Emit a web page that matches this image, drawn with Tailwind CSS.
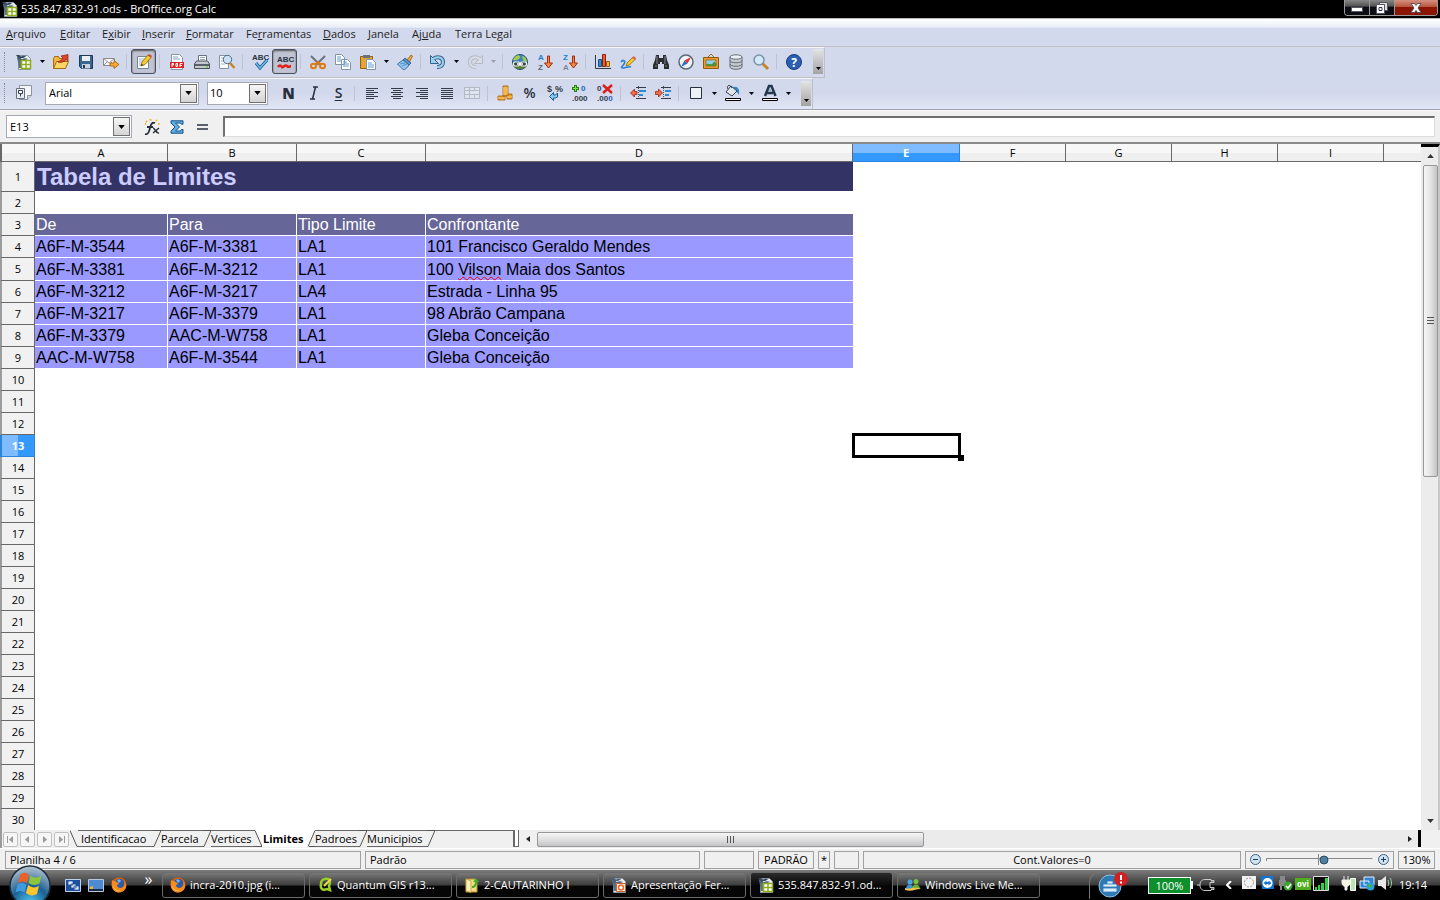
<!DOCTYPE html>
<html lang="pt-BR">
<head>
<meta charset="utf-8">
<title>535.847.832-91.ods - BrOffice.org Calc</title>
<script src="https://cdn.jsdelivr.net/npm/@tailwindcss/browser@4"></script>
</head>
<body class="flex h-screen min-w-[1100px] flex-col overflow-hidden bg-[#f0f0f0] font-['Open_Sans','Noto_Sans',sans-serif] text-[11px] leading-4 text-black">

<svg class="hidden" aria-hidden="true">
  <symbol id="down" viewBox="0 0 5 3"><path d="M0 0h5L2.500 3z" fill="currentColor"/></symbol>
  <symbol id="calc" viewBox="0 0 16 16"><path d="M2.500 1.500h9l3 3v11h-12z" fill="#e9edf1" stroke="#8a96a3"/><path d="M1 3h4v11H3z" fill="#5d7085"/><path d="M0 1.500c2-1 4 0 5 1 2-1 4-1 5 0l-3 1.500H3z" fill="#33475c"/><path d="M1 4.500c2-1 4 0 5 .500 2-1 4-1 6 0l-4 1.500H4z" fill="#4c6076"/><path d="M5.500 6.500h9v8h-9z" fill="#fff" stroke="#8fae1b" stroke-width="1.600"/><path d="M10 6.500v8M5.500 10.500h9" stroke="#8fae1b" stroke-width="1.500"/></symbol>
  <symbol id="firefox" viewBox="0 0 16 16"><circle cx="8" cy="8" r="7.500" fill="#e66000"/><circle cx="8.500" cy="6.500" r="4.800" fill="#2a5ca8"/><path d="M6 3c2-1 4 0 4 1L8 6z" fill="#7db4e8"/><path d="M1 3c1 1 2 1 3 1 1 1 3 1 4 3l-2 1c0 3 4 4 6 2 2-1 2-4 1-6 4 4 2 11-5 11.500C2 15 0 10 1 3z" fill="#f58a1f"/><path d="M2 8c1 4 4 6 8 5-3 3-8 0-8-5z" fill="#ffc94a"/></symbol>
</svg>

<header class="relative flex h-[19px] shrink-0 items-center border-b border-[#b8b8b8] bg-black pl-[2px] text-white">
  <svg class="mr-[3px] size-4"><use href="#calc"/></svg>
  <h1>535.847.832-91.ods - BrOffice.org Calc</h1>
  <div class="absolute top-0 right-[2px] flex h-4 overflow-hidden rounded-b border border-t-0 border-[#9a9a9a]">
    <button aria-label="Minimizar" class="flex w-[25px] items-center justify-center border-r border-[#9a9a9a] bg-linear-to-b from-[#888] via-[#555] via-40% to-[#0c0c14] to-50%"><svg class="mt-1 h-[5px] w-3" viewBox="0 0 12 5"><path d="M.5.500h11v4H.5z" fill="#fff" stroke="#556"/></svg></button>
    <button aria-label="Restaurar" class="flex w-[25px] items-center justify-center border-r border-[#9a9a9a] bg-linear-to-b from-[#888] via-[#555] via-40% to-[#0c0c14] to-50%"><svg class="h-3 w-3" viewBox="0 0 12 12"><path d="M3.500.500h8v8h-8z" fill="#ddd" stroke="#556"/><path d="M.5 2.500h8v9h-8z" fill="#fff" stroke="#556"/><path d="M3 5.500h3v3H3z" fill="#fff" stroke="#334"/></svg></button>
    <button aria-label="Fechar" class="flex w-[42px] items-center justify-center bg-linear-to-b from-[#d69080] via-[#b8543c] via-45% to-[#8c1500] to-50%"><svg class="h-[10px] w-3" viewBox="0 0 12 10"><path d="M1 .5h3.500L6 2.500 7.500.5H11L8 5l3 4.500H7.500L6 7.500l-1.500 2H1L4 5z" fill="#fff" stroke="#556"/></svg></button>
  </div>
</header>

<nav class="flex h-[28px] shrink-0 items-center gap-3 border-b border-[#c0c0c4] bg-linear-to-b from-white via-[#e8eef6] via-30% to-[#d3d9ec] to-35% px-[6px] pt-[2px] text-[#1e1e1e]">
  <a href="#" class="w-[42px]"><u>A</u>rquivo</a>
  <a href="#" class="w-[30px]"><u>E</u>ditar</a>
  <a href="#" class="w-[28px]">E<u>x</u>ibir</a>
  <a href="#" class="w-[32px]"><u>I</u>nserir</a>
  <a href="#" class="w-[48px]"><u>F</u>ormatar</a>
  <a href="#" class="w-[65px]">Fe<u>r</u>ramentas</a>
  <a href="#" class="w-[33px]"><u>D</u>ados</a>
  <a href="#" class="w-[32px]"><u>J</u>anela</a>
  <a href="#" class="w-[31px]">Aj<u>u</u>da</a>
  <a href="#">Terra Legal</a>
</nav>

<div role="toolbar" aria-label="Padrão" class="shrink-0 bg-[#d3d9ec]">
 <div class="flex h-[31px] w-[825px] items-center border-r border-b border-t border-r-[#c0c0c4] border-b-[#c0c0c4] border-t-[#f4f6fc] pb-[2px] [&>button]:flex [&>button]:h-[25px] [&>button]:w-[25px] [&>button]:shrink-0 [&>button]:items-center [&>button]:justify-center [&_svg]:size-4 [&_svg]:overflow-visible [&>button.dd]:w-3 [&_.dd_svg]:h-[3px] [&_.dd_svg]:w-[5px] [&>i]:mr-[4px] [&>i]:ml-[3px] [&>i]:h-[15px] [&>i]:w-0 [&>i]:border-l [&>i]:border-[#bfc3d0]">
  <span class="mr-[6px] ml-[4px] h-5 w-px border-l border-dotted border-[#888]"></span>
  <button aria-label="Novo"><svg><use href="#calc"/></svg></button>
  <button class="dd" aria-label="Opções de novo"><svg><use href="#down"/></svg></button>
  <button aria-label="Abrir"><svg viewBox="0 0 16 16"><path d="M.5 14.500v-10l1-2h4l1 2h6v2" fill="#f3b63c" stroke="#a86a0c"/><path d="M.5 14.500l3-7h12l-3 7z" fill="#fbd468" stroke="#a86a0c"/><path d="M5 8c2-1 4-2 5-4L8 2l7-1.500V7l-2-1.500C11 8 8 9 5 8z" fill="#e0452c" stroke="#8e1b10" stroke-width=".7"/></svg></button>
  <button aria-label="Salvar"><svg viewBox="0 0 16 16"><path d="M1.500 1.500h13v13h-11l-2-2z" fill="#39668c" stroke="#1d3a56"/><path d="M4 2h8v5H4z" fill="#e9eff5"/><path d="M4 10h8v4.500H4z" fill="#c6d2de"/><path d="M5 11h2v3H5z" fill="#1d3a56"/></svg></button>
  <button aria-label="E-mail"><svg viewBox="0 0 16 16"><path d="M.5 4.500h11v7H.5z" fill="#f7f7f7" stroke="#8b8b8b"/><path d="M.5 4.500L6 9l5.500-4.500M.5 11.500l4-4M11.500 11.500l-4-4" fill="none" stroke="#999"/><path d="M7 9h4V6.500l5 4-5 4V12H7z" fill="#f9a833" stroke="#9d5b08" stroke-width=".8"/></svg></button>
  <i></i>
  <button aria-label="Editar arquivo" aria-pressed="true" class="rounded-[3px] border border-[#4b4f5c] bg-[#bfc3d3] shadow-[inset_0_1px_2px_#555]"><svg viewBox="0 0 16 16"><path d="M1.500 2.500h11v12h-11z" fill="#fff" stroke="#76879a"/><path d="M3 5h7M3 7h6M3 9h5M3 11h5" stroke="#9db2c9"/><path d="M5 12l1-4 6-7 3 2.500-6 7z" fill="#f6c832" stroke="#8d6508" stroke-width=".8"/><path d="M12 1l1-1 3 2-1 1.500z" fill="#d43f30"/><path d="M5 12l.6-2 1.600 1z" fill="#222"/></svg></button>
  <i></i>
  <button aria-label="Exportar como PDF"><svg viewBox="0 0 16 16"><path d="M2.500.500h8l3 3v12h-11z" fill="#fff" stroke="#8394a6"/><path d="M4 3h5M4 5h7" stroke="#7fa0c4"/><path d="M1 8h14v6H1z" fill="#df2020"/><path d="M3 13V9.500h1.500v1.500H3M7 12.500v-3h1.500v3zM11 13V9.500h2.500M11 11.500h2" fill="none" stroke="#fff"/></svg></button>
  <button aria-label="Imprimir"><svg viewBox="0 0 16 16"><path d="M4.500 1.500h8v6h-8z" fill="#fff" stroke="#68747f"/><path d="M6 3.500h5M6 5.500h5" stroke="#9ab"/><path d="M2.500 7h11l2 3v4.500H.5V10z" fill="#c3c9cf" stroke="#4c5358"/><path d="M1 10h14v2H1z" fill="#5a6267"/><path d="M12 13h2" stroke="#4c2"/></svg></button>
  <button aria-label="Visualizar página"><svg viewBox="0 0 16 16"><path d="M.5 1.500h9v13h-9z" fill="#fff" stroke="#8394a6"/><path d="M2 4h4M2 7h3M2 10h4" stroke="#9db2c9"/><path d="M11 9l4.500 5" stroke="#c88524" stroke-width="2.500"/><circle cx="8.500" cy="5.500" r="4.200" fill="#c8e2f5" stroke="#51697e"/></svg></button>
  <i></i>
  <button aria-label="Ortografia"><svg viewBox="0 0 16 16"><text x="0" y="6" font-family="Liberation Sans" font-weight="700" font-size="8" fill="#28333f">ABC</text><path d="M4 9l4 5 7-8" fill="none" stroke="#124f86" stroke-width="3"/><path d="M4 9l4 5 7-8" fill="none" stroke="#6fbdf0" stroke-width="1.500"/></svg></button>
  <button aria-label="AutoVerificação ortográfica" aria-pressed="true" class="rounded-[3px] border border-[#4b4f5c] bg-[#bfc3d3] shadow-[inset_0_1px_2px_#555]"><svg viewBox="0 0 16 16"><text x="0" y="8" font-family="Liberation Sans" font-weight="700" font-size="8" fill="#28333f">ABC</text><path d="M1 13c2-3 3-1 4 0s3-3 5-1 3 0 4 0" fill="none" stroke="#e0231a" stroke-width="2.500"/></svg></button>
  <i></i>
  <button aria-label="Cortar"><svg viewBox="0 0 16 16"><path d="M1 2l9 9M15 2l-9 9" stroke="#69747f" stroke-width="2"/><ellipse cx="3.500" cy="12" rx="2.500" ry="2.200" fill="none" stroke="#df7a12" stroke-width="2"/><ellipse cx="12.500" cy="12" rx="2.500" ry="2.200" fill="none" stroke="#df7a12" stroke-width="2"/><path d="M5 11l3-3 3 3" fill="none" stroke="#df7a12" stroke-width="2"/></svg></button>
  <button aria-label="Copiar"><svg viewBox="0 0 16 16"><path d="M.5.500h6l3 3v7h-9zM6.500 5.500h6l3 3v7h-9z" fill="#fff" stroke="#8394a6"/><path d="M2 3h4M2 5h4M2 7h4M8 8h4M8 10h6M8 12h6" stroke="#5d9ad3"/></svg></button>
  <button aria-label="Colar"><svg viewBox="0 0 16 16"><path d="M.5 2.500h12v12H.5z" fill="#e5a436" stroke="#94600d"/><path d="M3 1h7v3H3z" fill="#66727d"/><path d="M6.500 5.500h6l3 3v7h-9z" fill="#fff" stroke="#8394a6"/><path d="M8 9h4M8 11h6M8 13h6" stroke="#5d9ad3"/></svg></button>
  <button class="dd" aria-label="Opções de colar"><svg><use href="#down"/></svg></button>
  <button aria-label="Pincel de estilo"><svg viewBox="0 0 16 16"><path d="M10 6l4-5 1.500 1-3 6z" fill="#f2a735" stroke="#95610d" stroke-width=".8"/><path d="M8 4l6 5-2 2-6-5z" fill="#5a93cd" stroke="#245489" stroke-width=".8"/><path d="M6 6l6 5c-2 3-4 5-6 4.500L.5 10z" fill="#8fc8f3" stroke="#245489" stroke-width=".8"/><path d="M3 10l5-1M5 12l5-2" stroke="#3b78b5" stroke-width=".7"/></svg></button>
  <i></i>
  <button aria-label="Desfazer"><svg viewBox="0 0 16 16"><path d="M3 5c4-3 10-2 10 3 0 4-3 5-6 5" fill="none" stroke="#32658e" stroke-width="4"/><path d="M.5 1.500v8h8L6 7 3 4z" fill="#9fd0ef" stroke="#32658e"/><path d="M3 5c4-3 10-2 10 3 0 4-3 5-6 5" fill="none" stroke="#9fd0ef" stroke-width="2"/></svg></button>
  <button class="dd" aria-label="Opções de desfazer"><svg><use href="#down"/></svg></button>
  <button aria-label="Refazer" disabled><svg viewBox="0 0 16 16"><path d="M13 5C9 2 3 3 3 8c0 4 3 5 6 5" fill="none" stroke="#b4b9c4" stroke-width="4"/><path d="M15.500 1.500v8h-8L10 7l3-3z" fill="#d9dde8" stroke="#b4b9c4"/><path d="M13 5C9 2 3 3 3 8c0 4 3 5 6 5" fill="none" stroke="#d9dde8" stroke-width="2"/></svg></button>
  <button class="dd text-[#9a9ea8]" aria-label="Opções de refazer" disabled><svg><use href="#down"/></svg></button>
  <i></i>
  <button aria-label="Hyperlink"><svg viewBox="0 0 16 16"><circle cx="8" cy="8" r="7.500" fill="#3f84c4" stroke="#24506f"/><path d="M2 4c3-4 6-3 6-1S4 7 1 6zM10 2c4 1 5 4 5 7l-4-3z" fill="#a5cf43"/><path d="M1 10h14c-1 4-4 5-7 5s-6-1-7-5z" fill="#56802f"/><path d="M2.500 8h4l1 1v2l-1 1h-4l-1-1V9zM9.500 8h4l1 1v2l-1 1h-4l-1-1V9z" fill="#3b4a3c" stroke="#eee" stroke-width="1.200"/><path d="M5 10h6" stroke="#fff" stroke-width="1.500"/></svg></button>
  <button aria-label="Classificar em ordem crescente"><svg viewBox="0 0 16 16"><text x="1" y="6" font-family="Liberation Sans" font-weight="700" font-size="8" fill="#1d7ec8">A</text><text x="1" y="16" font-family="Liberation Sans" font-weight="700" font-size="8" fill="#5b6672">Z</text><path d="M10.500 2h2v7h3l-4 5-4-5h3z" fill="#f08a3c" stroke="#a82a12"/></svg></button>
  <button aria-label="Classificar em ordem decrescente"><svg viewBox="0 0 16 16"><text x="1" y="6" font-family="Liberation Sans" font-weight="700" font-size="8" fill="#1d7ec8">Z</text><text x="1" y="16" font-family="Liberation Sans" font-weight="700" font-size="8" fill="#7c8794">A</text><path d="M10.500 2h2v7h3l-4 5-4-5h3z" fill="#f08a3c" stroke="#a82a12"/></svg></button>
  <i></i>
  <button aria-label="Gráfico"><svg viewBox="0 0 16 16"><path d="M.5 1v13.500H16" fill="none" stroke="#333c46"/><path d="M3.500 5.500h3v7h-3z" fill="#2f8ed2" stroke="#145084"/><path d="M7.500.500h3v12h-3z" fill="#ee5a32" stroke="#8d200c"/><path d="M11.500 7.500h3v5h-3z" fill="#f9b23c" stroke="#9a5b08"/></svg></button>
  <button aria-label="Mostrar funções de desenho"><svg viewBox="0 0 16 16"><path d="M1 8c2-3 5-1 3 2s-4 4-1 4 6-2 8-1" fill="none" stroke="#2d80d8" stroke-width="1.600"/><path d="M6 12l1-3 6-6 2.500 2-6 6z" fill="#f6c832" stroke="#8d6508" stroke-width=".8"/><path d="M12 4l1.500-2L16 4l-1 2z" fill="#e2604f"/></svg></button>
  <i></i>
  <button aria-label="Localizar e substituir"><svg viewBox="0 0 16 16"><path d="M3 1h3v3h4V1h3l1 5 2 5v4h-5v-5H9V8H7v2H5v5H0v-4l2-5z" fill="#2a2d30"/><path d="M4 2v8M12 2v8M2 12h2M12 12h2" stroke="#84898f"/></svg></button>
  <button aria-label="Navegador"><svg viewBox="0 0 16 16"><circle cx="8" cy="8" r="7" fill="#eef3f8" stroke="#5c6875" stroke-width="1.500"/><path d="M13 3L9.500 9.500l-3-3z" fill="#e3302a"/><path d="M3 13l3.500-6.500 3 3z" fill="#2a6cc4"/></svg></button>
  <button aria-label="Galeria"><svg viewBox="0 0 16 16"><path d="M5 3l3-3 3 3" fill="none" stroke="#986b25"/><path d="M.5 3.500h15v11H.5z" fill="#e79b31" stroke="#8f5a0c"/><path d="M3 6h10v6H3z" fill="#8fd0f2" stroke="#8f5a0c" stroke-width=".7"/><path d="M3 11c3-3 5 1 7-2s2 0 3 0v3H3z" fill="#4b9233"/></svg></button>
  <button aria-label="Fontes de dados"><svg viewBox="0 0 16 16"><path d="M2 3v10c0 3 12 3 12 0V3z" fill="#c5cacf" stroke="#666e76"/><ellipse cx="8" cy="3" rx="6" ry="2.200" fill="#eef0f2" stroke="#666e76"/><path d="M2 6.500c0 3 12 3 12 0M2 10c0 3 12 3 12 0" fill="none" stroke="#666e76"/></svg></button>
  <button aria-label="Zoom"><svg viewBox="0 0 16 16"><path d="M9.500 9.500l5.500 5.500" stroke="#c88524" stroke-width="3"/><circle cx="6" cy="6" r="5" fill="#d3e9f8" stroke="#7a92a8" stroke-width="1.500"/></svg></button>
  <i></i>
  <button aria-label="Ajuda"><svg viewBox="0 0 16 16"><circle cx="8" cy="8" r="7.500" fill="#2c5fb0" stroke="#163c7e"/><text x="8" y="12.500" text-anchor="middle" font-family="Open Sans" font-weight="700" font-size="12" fill="#fff">?</text></svg></button>
  <button aria-label="Mais botões" class="dd ml-[7px] !w-[10px] !items-end bg-linear-to-b from-[#e4e4e4] to-[#a4a4a4] pb-1"><svg><use href="#down"/></svg></button>
 </div>
</div>

<div role="toolbar" aria-label="Formatação" class="shrink-0 border-b border-[#9ea3b2] bg-linear-to-b from-[#d3d9ec] from-50% to-[#e0e6f4]">
 <div class="flex h-[31px] w-[813px] items-center border-t border-r border-t-[#f4f6fc] border-r-[#c0c0c4] pb-[2px] [&>button]:flex [&>button]:h-[25px] [&>button]:w-[25px] [&>button]:shrink-0 [&>button]:items-center [&>button]:justify-center [&>button>svg]:size-4 [&>button>svg]:overflow-visible [&>button.dd]:w-3 [&>.dd>svg]:h-[3px] [&>.dd>svg]:w-[5px] [&>i]:mr-[4px] [&>i]:ml-[3px] [&>i]:h-[15px] [&>i]:w-0 [&>i]:border-l [&>i]:border-[#bfc3d0]">
  <span class="mr-[6px] ml-[4px] h-5 w-px border-l border-dotted border-[#888]"></span>
  <button aria-label="Estilos e formatação"><svg viewBox="0 0 16 16"><path d="M3.500.500h12v10l-4 4h-8z" fill="#f4f6f9" stroke="#8a94a1"/><path d="M15.500 10.500h-4v4" fill="#cfd6e0" stroke="#8a94a1"/><path d="M.5 3.500h8v10h-8z" fill="#e9edf3" stroke="#65707d"/><path d="M2.500 5.500h4v3h-4zM4.500 8.500v3" fill="#fff" stroke="#39434f"/></svg></button>
  <div class="relative ml-[9px] w-[154px] shrink-0">
    <select aria-label="Nome da fonte" class="block h-[23px] w-full appearance-none border border-[#a5a9b5] bg-white pl-[3px] text-[11px]"><option>Arial</option></select>
    <span class="pointer-events-none absolute top-[2px] right-[2px] flex h-[19px] w-[17px] items-center justify-center border border-[#707070] bg-linear-to-b from-[#f6f6f6] to-[#d4d4d4]"><svg class="h-1 w-[7px]" viewBox="0 0 5 3"><use href="#down"/></svg></span>
  </div>
  <div class="relative mr-2 ml-2 w-[61px] shrink-0">
    <select aria-label="Tamanho da fonte" class="block h-[23px] w-full appearance-none border border-[#a5a9b5] bg-white pl-[2px] text-[11px]"><option>10</option></select>
    <span class="pointer-events-none absolute top-[2px] right-[2px] flex h-[19px] w-[17px] items-center justify-center border border-[#707070] bg-linear-to-b from-[#f6f6f6] to-[#d4d4d4]"><svg class="h-1 w-[7px]" viewBox="0 0 5 3"><use href="#down"/></svg></span>
  </div>
  <button class="text-[15px] font-extrabold text-[#28303c]">N</button>
  <button aria-label="Itálico"><svg viewBox="0 0 16 16"><path d="M7 2h5M4 14h5M9.500 2L6.500 14" fill="none" stroke="#28303c" stroke-width="1.500"/></svg></button>
  <button class="text-[14px] font-semibold text-[#28303c] underline underline-offset-2">S</button>
  <i></i>
  <button aria-label="Alinhar à esquerda"><svg viewBox="0 0 16 16"><path d="M2 3.500h12M2 5.500h8M2 7.500h12M2 9.500h8M2 11.500h12M2 13.500h8" stroke="#333c48"/></svg></button>
  <button aria-label="Centralizar"><svg viewBox="0 0 16 16"><path d="M2 3.500h12M4 5.500h8M2 7.500h12M4 9.500h8M2 11.500h12M4 13.500h8" stroke="#333c48"/></svg></button>
  <button aria-label="Alinhar à direita"><svg viewBox="0 0 16 16"><path d="M2 3.500h12M6 5.500h8M2 7.500h12M6 9.500h8M2 11.500h12M6 13.500h8" stroke="#333c48"/></svg></button>
  <button aria-label="Justificar"><svg viewBox="0 0 16 16"><path d="M2 3.500h12M2 5.500h12M2 7.500h12M2 9.500h12M2 11.500h12M2 13.500h12" stroke="#333c48"/></svg></button>
  <button aria-label="Mesclar células" disabled><svg viewBox="0 0 16 16"><path d="M.5 2.500h15v11H.5zM.5 5.500h15M.5 9.500h15M5.500 2.500v11M10.500 2.500v3M10.500 9.500v4" fill="#e1e5f0" stroke="#b4b9c6"/></svg></button>
  <i></i>
  <button aria-label="Moeda"><svg viewBox="0 0 16 16"><path d="M6 1h5v10H6zM10 9h5v5h-5zM1 11h7v4H1z" fill="#e99a2b" stroke="#a55f0b" stroke-width=".8"/><path d="M6 3h5M6 5h5M6 7h5M6 9h5M1 13h7M10 12h5" stroke="#ffd475"/></svg></button>
  <button aria-label="Porcentagem" class="text-[14px] font-semibold text-[#28303c]">%</button>
  <button aria-label="Formato padrão"><svg viewBox="0 0 16 16"><text x="0" y="7" font-family="Liberation Sans" font-weight="700" font-size="9" fill="#333c48">$</text><text x="8" y="7" font-family="Liberation Sans" font-weight="700" font-size="9" fill="#333c48">%</text><path d="M2.500 11.500l4-4V10h2l2-2v4l-2 1h-2v2.500z" fill="#8cc7ee" stroke="#175a94"/></svg></button>
  <button aria-label="Adicionar casa decimal"><svg viewBox="0 0 16 16"><path d="M3.500 0v7M0 3.500h7" stroke="#268018" stroke-width="3"/><path d="M3.500 1v5M1 3.500h5" stroke="#8be04e"/><text x="9" y="6" font-family="Liberation Sans" font-weight="700" font-size="8" fill="#1d62d0">0</text><text x="0" y="16" font-family="Liberation Sans" font-weight="700" font-size="8" fill="#333c48">.000</text></svg></button>
  <button aria-label="Excluir casa decimal"><svg viewBox="0 0 16 16"><text x="0" y="6" font-family="Liberation Sans" font-weight="700" font-size="8" fill="#333c48">0</text><text x="0" y="16" font-family="Liberation Sans" font-weight="700" font-size="8" fill="#333c48">.00<tspan fill="#1d62d0">0</tspan></text><path d="M6 0l9 8M15 0L6 8" stroke="#d9201a" stroke-width="2.500"/></svg></button>
  <i></i>
  <button aria-label="Diminuir recuo"><svg viewBox="0 0 16 16"><path d="M8.500 1v14" stroke="#555" stroke-dasharray="1 1"/><path d="M6 2.500h10M6 13.500h10" stroke="#333c48"/><path d="M9 6h7M9 10h4" stroke="#2b8bd8" stroke-width="2"/><path d="M.5 8l4-4v2.500H7v3H4.500V12z" fill="#ee6c4a" stroke="#9a2412" stroke-width=".8"/></svg></button>
  <button aria-label="Aumentar recuo"><svg viewBox="0 0 16 16"><path d="M8.500 1v14" stroke="#555" stroke-dasharray="1 1"/><path d="M6 2.500h10M6 13.500h10" stroke="#333c48"/><path d="M10 6h6M10 10h4" stroke="#2b8bd8" stroke-width="2"/><path d="M7.500 8l-4-4v2.500H.5v3h3V12z" fill="#ee6c4a" stroke="#9a2412" stroke-width=".8"/></svg></button>
  <i></i>
  <button aria-label="Bordas"><svg viewBox="0 0 16 16"><path d="M2.500 2.500h11v11h-11z" fill="#edf3f7" stroke="#28303c"/></svg></button>
  <button class="dd" aria-label="Opções de bordas"><svg><use href="#down"/></svg></button>
  <button aria-label="Cor do plano de fundo"><svg viewBox="0 0 16 16"><path d="M8 2c5-1 7 2 6 8-1-2-2-3-4-4z" fill="#2e8ac8"/><path d="M6 1l6 5-5 5-6-4z" fill="#dfe5ea" stroke="#39434f"/><path d="M3 4C1 0 5-1 7 3" fill="none" stroke="#39434f"/><path d="M.5 13.500h15v2H.5z" fill="#fff" stroke="#000"/></svg></button>
  <button class="dd" aria-label="Opções de plano de fundo"><svg><use href="#down"/></svg></button>
  <button aria-label="Cor da fonte"><svg viewBox="0 0 16 16"><path d="M3 11L7 1h2.500l4 10M5 8h6" fill="none" stroke="#22384f" stroke-width="2.500"/><path d="M8 3l-1 3h2z" fill="#7fa5c5"/><path d="M.5 13.500h15v2H.5z" fill="#fff" stroke="#000"/></svg></button>
  <button class="dd" aria-label="Opções de cor da fonte"><svg><use href="#down"/></svg></button>
  <button aria-label="Mais botões" class="dd ml-[7px] !w-[10px] !items-end bg-linear-to-b from-[#e4e4e4] to-[#a4a4a4] pb-1"><svg><use href="#down"/></svg></button>
 </div>
</div>

<div class="flex h-[34px] shrink-0 items-center border-t border-b-2 border-t-[#fafafa] border-b-[#8a8a8a] bg-[#f0f0f0] pr-[5px] pl-[6px]">
  <div class="flex h-[23px] w-[126px] items-center border border-[#a5a9b5] bg-white pr-px">
    <input aria-label="Caixa de nome" value="E13" class="w-full min-w-0 flex-1 pl-[3px] outline-none">
    <button aria-label="Abrir lista de nomes" class="flex h-[19px] w-[17px] items-center justify-center border border-[#707070] bg-linear-to-b from-[#f6f6f6] to-[#d4d4d4]"><svg class="h-1 w-[7px]" viewBox="0 0 5 3"><use href="#down"/></svg></button>
  </div>
  <button aria-label="Assistente de funções" class="ml-[11px] flex w-[18px] justify-center"><svg class="size-4" viewBox="0 0 16 16"><path d="M1 15c3 1 4-2 5-6s2-6 5-5M3 8h6" fill="none" stroke="#28303c" stroke-width="1.800"/><path d="M9 9c2 0 3 6 6 5M15 9l-6 5" fill="none" stroke="#28303c" stroke-width="1.500"/><path d="M2 2l1 1M6 0l1 1.500M12 1l1 1M14 5h1.500M1 5h1" stroke="#f0b51c" stroke-width="1.800"/></svg></button>
  <button aria-label="Soma" class="ml-[7px] flex w-[18px] justify-center"><svg class="h-[14px] w-[14px]" viewBox="0 0 14 14"><path d="M1 .8h12v3.400h-1.600L10.500 3H5.500l4 4-4 4h5l1-1.500H13v3.700H1v-2L5 7 1 3z" fill="#5eb0e6" stroke="#124f86"/></svg></button>
  <button aria-label="Função" class="ml-[7px] flex w-[18px] justify-center"><svg class="h-[6px] w-[11px]" viewBox="0 0 11 6"><path d="M0 1h11M0 5h11" stroke="#28303c" stroke-width="1.500"/></svg></button>
  <input aria-label="Linha de entrada" class="ml-[12px] h-[21px] min-w-0 flex-1 border-t-2 border-r border-b border-l-2 border-t-[#6f6f6f] border-r-[#ddd] border-b-[#ddd] border-l-[#6f6f6f] bg-white px-1 outline-none">
</div>

<main class="flex min-h-0 flex-1 bg-white">
  <div class="min-w-0 flex-1 overflow-hidden">
    <table class="w-full table-fixed border-separate border-spacing-0 [&_td]:overflow-visible [&_td]:p-0 [&_td]:text-left [&_td]:align-middle [&_td]:font-['Liberation_Sans',Arial,sans-serif] [&_td]:text-[16px] [&_td]:leading-5 [&_td]:whitespace-nowrap [&_th]:border-r [&_th]:border-b [&_th]:border-[#686868] [&_th]:bg-[#f1f1f1] [&_th]:p-0 [&_th]:font-normal [&_tbody_th]:border-l-2 [&_tbody_th]:border-l-[#9c9c9c] [&_thead_th]:bg-linear-to-b [&_thead_th]:from-[#f7f7f7] [&_thead_th]:from-50% [&_thead_th]:to-[#efefef] [&_thead_th]:to-50% [&_tbody_tr]:h-[22px] [&_.fill_td]:border-r [&_.fill_td]:border-b [&_.fill_td]:border-white [&_.fill_td]:bg-[#9999ff] [&_.fill_td]:pt-px [&_.fill_td]:pl-px">
      <colgroup><col class="w-[35px]"><col class="w-[133px]"><col class="w-[129px]"><col class="w-[129px]"><col class="w-[427px]"><col class="w-[107px]"><col class="w-[106px]"><col class="w-[106px]"><col class="w-[106px]"><col class="w-[106px]"><col></colgroup>
      <thead><tr class="h-[18px]"><th class="border-l-2 border-l-[#9c9c9c]"></th><th>A</th><th>B</th><th>C</th><th>D</th><th class="!border-[#2a84dc] !from-[#7fbcff] !to-[#3399ff] !font-bold text-white">E</th><th>F</th><th>G</th><th>H</th><th>I</th><th class="!border-r-0"></th></tr></thead>
      <tbody>
        <tr class="!h-[30px]"><th>1</th><td colspan="4" class="border-b border-white bg-[#333366] !pl-[2px] !text-[24px] !leading-7 font-bold text-[#ccccff]">Tabela de Limites</td></tr>
        <tr><th>2</th></tr>
        <tr class="fill text-white [&>td]:!bg-[#666699]"><th class="text-black">3</th><td>De</td><td>Para</td><td>Tipo Limite</td><td class="!border-r-0">Confrontante</td></tr>
        <tr class="fill"><th>4</th><td>A6F-M-3544</td><td>A6F-M-3381</td><td>LA1</td><td class="!border-r-0">101 Francisco Geraldo Mendes</td></tr>
        <tr class="fill !h-[23px] [&>td]:!pt-[2px]"><th>5</th><td>A6F-M-3381</td><td>A6F-M-3212</td><td>LA1</td><td class="!border-r-0">100 <span class="underline decoration-red-600 decoration-wavy decoration-1 underline-offset-1 [text-decoration-skip-ink:none]">Vilson</span> Maia dos Santos</td></tr>
        <tr class="fill"><th>6</th><td>A6F-M-3212</td><td>A6F-M-3217</td><td>LA4</td><td class="!border-r-0">Estrada - Linha 95</td></tr>
        <tr class="fill"><th>7</th><td>A6F-M-3217</td><td>A6F-M-3379</td><td>LA1</td><td class="!border-r-0">98 Abrão Campana</td></tr>
        <tr class="fill"><th>8</th><td>A6F-M-3379</td><td>AAC-M-W758</td><td>LA1</td><td class="!border-r-0">Gleba Conceição</td></tr>
        <tr class="fill"><th>9</th><td>AAC-M-W758</td><td>A6F-M-3544</td><td>LA1</td><td class="!border-r-0">Gleba Conceição</td></tr>
        <tr><th>10</th></tr>
        <tr><th>11</th></tr>
        <tr><th>12</th></tr>
        <tr><th class="!border-[#2a84dc] !bg-linear-to-r from-[#7fbcff] from-50% to-[#3399ff] to-50% !font-bold text-white">13</th><td></td><td></td><td></td><td></td><td class="relative"><span class="absolute -top-[2px] -left-px h-[25px] w-[109px] border-3 border-black"></span><span class="absolute top-5 left-[105px] size-[6px] bg-black"></span></td></tr>
        <tr><th>14</th></tr>
        <tr><th>15</th></tr>
        <tr><th>16</th></tr>
        <tr><th>17</th></tr>
        <tr><th>18</th></tr>
        <tr><th>19</th></tr>
        <tr><th>20</th></tr>
        <tr><th>21</th></tr>
        <tr><th>22</th></tr>
        <tr><th>23</th></tr>
        <tr><th>24</th></tr>
        <tr><th>25</th></tr>
        <tr><th>26</th></tr>
        <tr><th>27</th></tr>
        <tr><th>28</th></tr>
        <tr><th>29</th></tr>
        <tr><th>30</th></tr>
      </tbody>
    </table>
  </div>
  <div class="flex w-[19px] shrink-0 flex-col items-center border-t-3 border-r-2 border-t-black border-r-[#c8c8c8] bg-[#ececec] pl-px">
    <button aria-label="Rolar para cima" class="flex h-[18px] w-full items-center justify-center"><svg class="h-1 w-[7px] rotate-180 text-[#333]"><use href="#down"/></svg></button>
    <div class="flex h-[312px] w-[15px] shrink-0 items-center justify-center rounded-xs border border-[#979797] bg-linear-to-r from-[#f5f5f5] via-[#e4e4e4] to-[#c4c4c8]"><svg class="h-2 w-[7px]" viewBox="0 0 7 8"><path d="M0 .5h7M0 3.500h7M0 6.500h7" stroke="#555"/></svg></div>
    <button aria-label="Rolar para baixo" class="mt-auto flex h-[18px] w-full items-center justify-center"><svg class="h-1 w-[7px] text-[#333]"><use href="#down"/></svg></button>
  </div>
</main>

<div class="flex h-[18px] shrink-0 border-l-2 border-[#9c9c9c] bg-[#f0f0f0]">
  <div class="flex items-center gap-[2px] pl-px text-[#999] [&>button]:flex [&>button]:size-[15px] [&>button]:items-center [&>button]:justify-center [&>button]:rounded-xs [&>button]:border [&>button]:border-[#c0c0c0] [&>button]:bg-[#f6f6f6] [&_svg]:size-[7px]">
    <button aria-label="Primeira planilha"><svg viewBox="0 0 7 7"><path d="M0 0h1v7H0zM6 0v7L2 3.500z" fill="currentColor"/></svg></button>
    <button aria-label="Planilha anterior"><svg viewBox="0 0 7 7"><path d="M5 0v7L1 3.500z" fill="currentColor"/></svg></button>
    <button aria-label="Próxima planilha"><svg viewBox="0 0 7 7"><path d="M2 0v7l4-3.500z" fill="currentColor"/></svg></button>
    <button aria-label="Última planilha"><svg viewBox="0 0 7 7"><path d="M6 0h1v7H6zM1 0v7l4-3.500z" fill="currentColor"/></svg></button>
  </div>
  <div role="tablist" class="ml-px flex flex-1 [&>button]:h-[17px] [&>button]:shrink-0 [&>button]:border-y [&>button]:border-[#686868] [&>button]:leading-[15px] [&>button]:whitespace-nowrap [&>button[role=tab]]:text-left [&>svg]:h-[17px] [&>svg]:w-2 [&>svg]:shrink-0">
    <svg viewBox="0 0 8 17"><path d="M0 .5L7 16.500h1" fill="none" stroke="#555"/></svg>
    <button role="tab" class="w-[75px] pl-[3px]">Identificacao</button>
    <svg viewBox="0 0 8 17"><path d="M0 16.500h1L8 .5H0" fill="none" stroke="#555"/></svg>
    <button role="tab" class="w-[42px]">Parcela</button>
    <svg viewBox="0 0 8 17"><path d="M0 16.500h1L8 .5H0" fill="none" stroke="#555"/></svg>
    <button role="tab" class="w-[43px]">Vertices</button>
    <svg viewBox="0 0 8 17"><path d="M1 0h7v17z" fill="#fff"/><path d="M0 .5h1L8 16.500H0" fill="none" stroke="#555"/></svg>
    <button role="tab" aria-selected="true" class="w-[45px] !border-white bg-white pl-px font-bold">Limites</button>
    <svg viewBox="0 0 8 17"><path d="M0 0h8L1 17H0z" fill="#fff"/><path d="M1 16.500L8 .5M2 16.500h6" fill="none" stroke="#555"/></svg>
    <button role="tab" class="w-[44px]">Padroes</button>
    <svg viewBox="0 0 8 17"><path d="M0 16.500h1L8 .5H0" fill="none" stroke="#555"/></svg>
    <button role="tab" class="w-[60px]">Municipios</button>
    <svg viewBox="0 0 8 17"><path d="M0 16.500h1L8 .5H0" fill="none" stroke="#555"/></svg>
    <div class="h-[17px] w-[78px] shrink-0 border-t border-[#686868]"></div>
    <div class="h-[17px] w-[6px] shrink-0 border border-t-0 border-l-2 border-[#686868] bg-white"></div>
    <button aria-label="Rolar para a esquerda" class="flex w-[18px] items-center justify-center !border-0"><svg class="size-[6px]" viewBox="0 0 6 6"><path d="M5 0v6L1 3z" fill="#222"/></svg></button>
    <div class="flex min-w-0 flex-1 items-center bg-[#ebebeb]">
      <div class="flex h-[15px] w-[387px] items-center justify-center rounded-xs border border-[#979797] bg-linear-to-b from-[#f5f5f5] via-[#e0e0e0] to-[#c4c4c8]"><svg class="h-[7px] w-2" viewBox="0 0 8 7"><path d="M.5 0v7M3.500 0v7M6.500 0v7" stroke="#555"/></svg></div>
    </div>
    <button aria-label="Rolar para a direita" class="flex w-[17px] items-center justify-center !border-0 bg-[#ebebeb]"><svg class="size-[6px]" viewBox="0 0 6 6"><path d="M1 0v6l4-3z" fill="#222"/></svg></button>
    <div class="h-[17px] w-[3px] bg-black"></div>
    <div class="w-[19px]"></div>
  </div>
</div>

<footer class="flex h-[22px] shrink-0 items-center gap-1 border-t border-white px-[5px] [&>*]:h-[18px] [&>*]:border [&>*]:border-[#a0a0a0] [&>*]:px-1 [&>*]:leading-4 [&>*]:whitespace-nowrap">
  <div class="w-[356px] shrink-0">Planilha 4 / 6</div>
  <div class="w-[335px] shrink-0">Padrão</div>
  <div class="w-[50px] shrink-0"></div>
  <div class="w-[56px] shrink-0 !px-0 text-center">PADRÃO</div>
  <div class="w-[12px] shrink-0 !px-0 text-center">*</div>
  <div class="w-[25px] shrink-0"></div>
  <div class="flex-1 text-center">Cont.Valores=0</div>
  <div class="flex w-[149px] shrink-0 items-center justify-between">
    <button aria-label="Reduzir zoom"><svg class="size-[11px]" viewBox="0 0 11 11"><circle cx="5.500" cy="5.500" r="5" fill="#cfe3f2" stroke="#3f6484"/><path d="M3 5.500h5" stroke="#1d3c5a"/></svg></button>
    <svg class="h-[11px] w-[107px]" viewBox="0 0 107 11"><path d="M.5 7V4.500h106" fill="none" stroke="#888"/><path d="M52.500 0v11" stroke="#888"/><circle cx="58" cy="6" r="4" fill="#4f7f9f" stroke="#254a66"/></svg>
    <button aria-label="Aumentar zoom"><svg class="size-[11px]" viewBox="0 0 11 11"><circle cx="5.500" cy="5.500" r="5" fill="#cfe3f2" stroke="#3f6484"/><path d="M3 5.500h5M5.500 3v5" stroke="#1d3c5a"/></svg></button>
  </div>
  <div class="w-[37px] shrink-0 !px-0 text-center">130%</div>
</footer>

<nav aria-label="Barra de tarefas" class="relative flex h-[30px] shrink-0 items-center bg-linear-to-b from-[#7c7c7c] via-[#3a3a3a] via-50% to-black to-55% pr-[13px] text-white">
  <button aria-label="Iniciar" class="absolute -top-[5px] left-[9px]"><svg class="h-[35px] w-[42px]" viewBox="0 0 42 35"><defs><radialGradient id="orb" cx=".5" cy=".95" r=".9"><stop offset="0" stop-color="#4fd0f5"/><stop offset=".5" stop-color="#1b5f93"/><stop offset="1" stop-color="#a9bccb"/></radialGradient></defs><circle cx="21" cy="21" r="20" fill="url(#orb)" stroke="#1c2c3a" stroke-width="1.500"/><path d="M11 10c3-3 6-3 9 0l-2 8c-3-2-6-2-9 0z" fill="#e8622a"/><path d="M21.500 10.500c3 3 7 3 11 0l-2 8c-4 2-7 2-11-.500z" fill="#8cc63f"/><path d="M8.500 19.500c3-2 6-2 9 0l-2 8c-3-2-6-2-9 0z" fill="#3e9be0"/><path d="M19 20c4 3 7 3 11 1l-2 8c-4 2-7 2-11-1z" fill="#fcc52d"/></svg></button>
  <div class="flex items-center gap-[7px] pl-[65px] [&_svg]:size-4">
    <button aria-label="Alternar janelas"><svg viewBox="0 0 16 16"><path d="M.5 2.500h15v12H.5z" fill="#1f4f9c" stroke="#bcd2ee"/><path d="M3 4h5v4H3zM6 7h5v4H6zM9 9h5v4H9z" fill="#dcebfa" stroke="#1f4f9c" stroke-width=".8"/></svg></button>
    <button aria-label="Mostrar área de trabalho"><svg viewBox="0 0 16 16"><path d="M.5 2.500h15v12H.5z" fill="#4d8ad2" stroke="#bcc8d8"/><path d="M1 12h14v2H1z" fill="#1a2c44"/><path d="M2 10l3-1v3H2z" fill="#f2b436"/></svg></button>
    <button aria-label="Firefox"><svg><use href="#firefox"/></svg></button>
    <button aria-label="Mais atalhos" class="-mt-3 ml-[10px] w-[9px] text-[16px]">»</button>
  </div>
  <div class="ml-[9px] flex gap-1 [&_svg]:size-4 [&_svg]:shrink-0 [&>button]:flex [&>button]:h-[26px] [&>button]:w-[143px] [&>button]:items-center [&>button]:gap-[4px] [&>button]:rounded-[3px] [&>button]:border [&>button]:border-[#6c6c6c] [&>button]:bg-linear-to-b [&>button]:from-[#7a7a7a] [&>button]:via-[#3c3c3c] [&>button]:via-50% [&>button]:to-[#060606] [&>button]:to-55% [&>button]:pl-[7px] [&>button]:whitespace-nowrap">
    <button><svg><use href="#firefox"/></svg>incra-2010.jpg (i...</button>
    <button><svg viewBox="0 0 16 16"><path d="M8 2c5-1 6 2 4 7l1 4-3-1c-5 2-7-1-6-5 0-3 2-5 4-5z" fill="none" stroke="#9ad024" stroke-width="2.500"/><path d="M7 9l7-7" stroke="#e8e04a" stroke-width="2"/></svg>Quantum GIS r13...</button>
    <button><svg viewBox="0 0 16 16"><path d="M2 2h9l2 2v11H2z" fill="#f5dc84" stroke="#b58e2c"/><path d="M2 2l5 2v11.500L2 14z" fill="#fbeeb4" stroke="#b58e2c" stroke-width=".7"/><path d="M8 9c2 0 3-2 3-4H9l3-4 3 4h-2c0 4-2 6-5 6z" fill="#3fb02c"/></svg>2-CAUTARINHO I</button>
    <button><svg viewBox="0 0 16 16"><path d="M2.500 1.500h9l3 3v11h-12z" fill="#e9edf1" stroke="#8a96a3"/><path d="M1 3h4v11H3z" fill="#5d7085"/><path d="M0 1.500c2-1 4 0 5 1 2-1 4-1 5 0l-3 1.500H3zM1 4.500c2-1 4 0 5 .500 2-1 4-1 6 0l-4 1.500H4z" fill="#4c6076"/><path d="M5.500 6.500h9v8h-9z" fill="#fff" stroke="#d0622a"/><circle cx="10" cy="10.500" r="2.500" fill="#fff" stroke="#e8662a" stroke-width="1.500"/></svg>Apresentação Fer...</button>
    <button aria-current="true" class="!from-[#2c2c2c] !via-[#0a0a0a]"><svg><use href="#calc"/></svg>535.847.832-91.od...</button>
    <button><svg viewBox="0 0 16 16"><circle cx="5" cy="5" r="2.500" fill="#4aa6e2"/><circle cx="11" cy="4.500" r="2.500" fill="#7cc23c"/><path d="M1 12c0-6 7-6 8 0z" fill="#3f92d2"/><path d="M7 12c0-6 8-6 8 0z" fill="#68b02c"/><path d="M0 11c5 2 8-2 16 1-6 0-9 3-16 1z" fill="#f3c04a"/></svg>Windows Live Me...</button>
  </div>
  <div class="ml-auto flex items-center">
    <button aria-label="Central de avisos" class="rounded-tl-xl border-t border-l border-[#777] pl-2"><svg class="h-[27px] w-[36px]" viewBox="0 0 36 27"><circle cx="12" cy="14" r="11" fill="#2d7ab5" stroke="#8cc2e4"/><path d="M5 12h14v3H5zM5 16h14v4H5zM9 12V9h6v3" fill="#d9ecf8" stroke="#2d7ab5" stroke-width=".8"/><circle cx="23" cy="7" r="7" fill="#cf2026"/><path d="M23 3v5M23 9.500v2" stroke="#fff" stroke-width="2"/></svg></button>
    <div class="ml-[14px] h-[17px] w-[43px] border border-white bg-[#0d8f2c] text-center leading-[15px]">100%</div>
    <svg class="h-4 w-[25px]" viewBox="0 0 25 16"><path d="M0 4h2v8H0z" fill="#fff"/><path d="M23 3.500h-3v-1h-6c-4 0-5 3-5 5.500s1 5.500 5 5.500h6v-1h3M20 5h3M20 11h3M23 3.500v2h-4v5h4v2M9 8H6" fill="none" stroke="#ccc"/></svg>
    <button aria-label="Mostrar ícones ocultos" class="ml-[10px] flex w-[8px]"><svg class="h-2 w-[6px]" viewBox="0 0 6 8"><path d="M5 0L1 4l4 4" fill="none" stroke="#fff" stroke-width="2"/></svg></button>
    <div class="-mt-1 ml-[7px] flex gap-[2px] [&>svg]:size-4">
      <svg viewBox="0 0 16 16"><path d="M1 1h14v13H1z" fill="#f2f2f2"/><circle cx="8" cy="7.500" r="4.500" fill="none" stroke="#888" stroke-dasharray="2 1.500"/></svg>
      <svg viewBox="0 0 16 16"><path d="M2 1h12l1 13H3z" fill="#1276d8"/><circle cx="8.500" cy="8" r="5" fill="#fff"/><path d="M4.500 8l3-2.500V7h2V5.500l3 2.500-3 2.500V9h-2v1.500z" fill="#1276d8"/></svg>
      <svg viewBox="0 0 16 16"><path d="M3 1h5v4h1v6H5v4H3V11H2V5h1z" fill="#888"/><circle cx="11" cy="11" r="4.500" fill="#39a52c"/><path d="M9 11l2 2 3-4" fill="none" stroke="#fff" stroke-width="1.500"/></svg>
      <svg viewBox="0 0 16 16"><path d="M0 3h16v12H0z" fill="#4fae1c"/><text x="8" y="12" text-anchor="middle" font-family="Open Sans" font-weight="700" font-size="8" fill="#fff">ovi</text></svg>
      <svg viewBox="0 0 16 16"><path d="M.5 1.500h15v14H.5z" fill="#0a0a0a" stroke="#ddd"/><path d="M2 15v-3h2v3zM5 15v-5h2v5zM8 15V8h3v7zM12 15V3h3v12z" fill="#2fd048"/></svg>
    </div>
    <div class="-mt-1 ml-[12px] flex gap-[2px] [&>svg]:size-4">
      <svg viewBox="0 0 16 16"><path d="M3 1v4M7 1v4M1 5h8v3c0 3-3 3-3 4v3H4v-3c0-1-3-1-3-4z" fill="#f5f5e0" stroke="#eee"/><path d="M9.500 3.500h5v12h-5z" fill="#b6e8b0" stroke="#fff"/></svg>
      <svg viewBox="0 0 16 16"><path d="M5 2h10v8H5zM1 6h9v7H1z" fill="#2f86d8" stroke="#e8eef4"/><circle cx="11.500" cy="11.500" r="4" fill="#2a9ce0"/><path d="M10 9l3 1-1 3-3-1z" fill="#4fb82e"/></svg>
      <svg viewBox="0 0 16 16"><path d="M1 5h3l5-4v14l-5-4H1z" fill="#e8e8e8"/><path d="M11 5c1 2 1 4 0 6M13 3c2 3 2 7 0 10" fill="none" stroke="#9fd8a8"/></svg>
    </div>
    <time class="ml-[6px]">19:14</time>
  </div>
</nav>
</body>
</html>
